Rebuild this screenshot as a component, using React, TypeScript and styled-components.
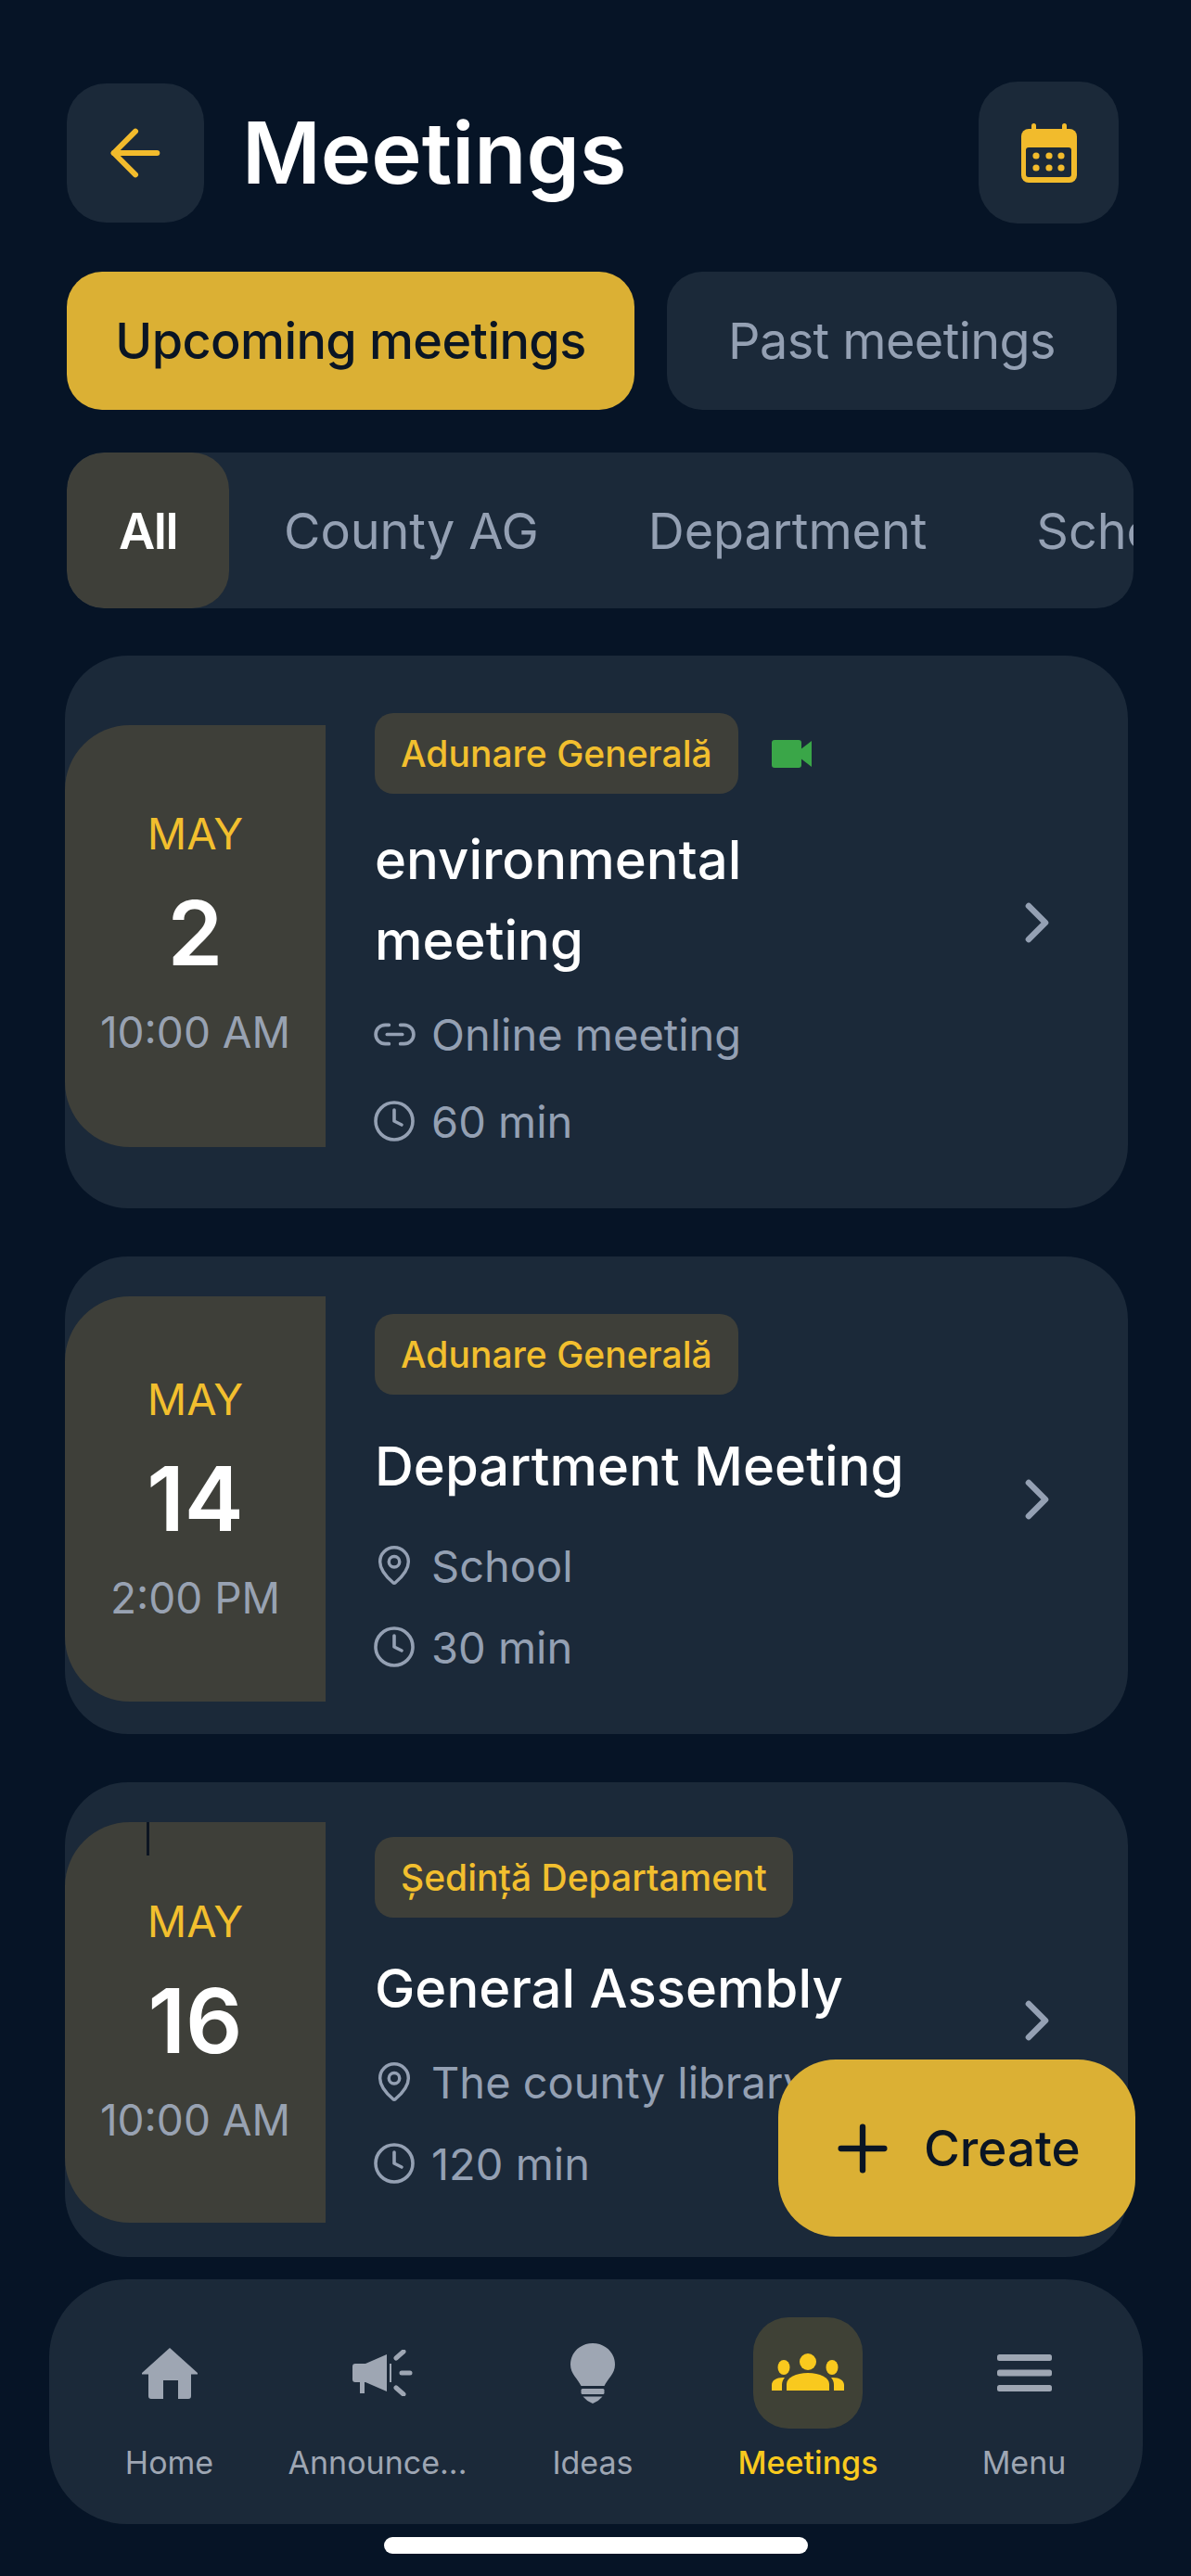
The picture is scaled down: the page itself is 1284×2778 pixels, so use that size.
import React from "react";
import styled, { createGlobalStyle } from "styled-components";
import { ArrowLeft, ChevronRight, Clock, Link2, MapPin, Plus } from "lucide-react";

const Global = createGlobalStyle`
  html, body { margin: 0; padding: 0; background: #061426; }
  * { box-sizing: border-box; }
`;

const Page = styled.div`
  position: relative;
  width: 1284px;
  height: 2778px;
  overflow: hidden;
  background: #061426;
  font-family: Inter, "Liberation Sans", sans-serif;
  color: #fff;
`;
const Content = styled.div`
  padding: 88px 70px 0;
  display: flex;
  flex-direction: column;
`;
const Header = styled.header`
  display: flex;
  align-items: center;
  width: 1134px;
  margin-left: 2px;
`;
const IconBtn = styled.button<{ $w: number; $h: number }>`
  width: ${(p) => p.$w}px;
  height: ${(p) => p.$h}px;
  flex: none;
  border: 0;
  padding: 0;
  border-radius: 42px;
  background: #1b2939;
  color: #f2bb2c;
  display: flex;
  align-items: center;
  justify-content: center;
`;
const Title = styled.h1`
  flex: 1;
  margin: 0 0 0 41px;
  font-size: 92px;
  line-height: 110px;
  font-weight: 600;
`;
const Tabs = styled.div`
  display: flex;
  gap: 35px;
  margin: 52px 0 0 2px;
`;
const Tab = styled.div<{ $active?: boolean; $w: number }>`
  width: ${(p) => p.$w}px;
  height: 149px;
  border-radius: 38px;
  display: flex;
  align-items: center;
  justify-content: center;
  font-size: 54px;
  letter-spacing: -0.6px;
  font-weight: ${(p) => (p.$active ? 500 : 400)};
  background: ${(p) => (p.$active ? "#dbb034" : "#1b2939")};
  color: ${(p) => (p.$active ? "#0a1524" : "#94a0b3")};
`;
const Filters = styled.div`
  display: flex;
  width: 1150px;
  height: 168px;
  margin: 46px 0 0 2px;
  border-radius: 40px;
  background: #1b2939;
  overflow: hidden;
`;
const Filter = styled.div<{ $active?: boolean }>`
  flex: none;
  display: flex;
  align-items: center;
  padding: 0 ${(p) => (p.$active ? 56 : 59)}px;
  font-size: 54px;
  font-weight: ${(p) => (p.$active ? 600 : 400)};
  letter-spacing: ${(p) => (p.$active ? -1.5 : -0.1)}px;
  border-radius: 40px;
  background: ${(p) => (p.$active ? "#3e3f39" : "transparent")};
  color: ${(p) => (p.$active ? "#fff" : "#94a0b3")};
`;
const Cards = styled.div`
  display: flex;
  flex-direction: column;
  gap: 52px;
  margin-top: 51px;
`;
const Card = styled.article<{ $h: number }>`
  display: flex;
  width: 1146px;
  height: ${(p) => p.$h}px;
  border-radius: 68px;
  background: #1b2939;
`;
const DateBlock = styled.div<{ $top: number; $bottom: number; $lift: number }>`
  position: relative;
  flex: none;
  width: 281px;
  margin: ${(p) => p.$top}px 0 ${(p) => p.$bottom}px;
  padding-bottom: ${(p) => p.$lift}px;
  border-radius: 70px 0 0 70px;
  background: #3e3f39;
  display: flex;
  flex-direction: column;
  align-items: center;
  justify-content: center;
`;
const Tick = styled.span`
  position: absolute;
  left: 88px;
  top: 0;
  width: 3px;
  height: 36px;
  background: #0c1522;
`;
const Month = styled.div`
  font-size: 47px;
  line-height: 60px;
  color: #f2bf2e;
`;
const Day = styled.div`
  font-size: 96px;
  line-height: 110px;
  font-weight: 600;
  margin: 22px 0;
`;
const Time = styled.div`
  font-size: 46px;
  line-height: 60px;
  color: #98a2b2;
`;
const Body = styled.div<{ $top: number }>`
  flex: 1;
  min-width: 0;
  padding: ${(p) => p.$top}px 0 0 53px;
`;
const TagRow = styled.div`
  display: flex;
  align-items: center;
  gap: 36px;
`;
const Tag = styled.span`
  height: 87px;
  padding: 0 28px;
  border-radius: 20px;
  background: #3e3f39;
  color: #f2bf2e;
  font-size: 39px;
  font-weight: 500;
  display: flex;
  align-items: center;
`;
const CardTitle = styled.h2<{ $before: number; $after: number }>`
  width: 640px;
  margin: ${(p) => p.$before}px 0 ${(p) => p.$after}px;
  font-size: 58px;
  line-height: 87px;
  font-weight: 500;
`;
const Meta = styled.div<{ $row: number }>`
  height: ${(p) => p.$row}px;
  display: flex;
  align-items: center;
  gap: 18px;
  font-size: 47px;
  white-space: nowrap;
  color: #94a0b3;
`;
const MetaIcon = styled.span`
  width: 44px;
  flex: none;
  display: flex;
  justify-content: center;
  margin-left: -1px;
  svg { flex: none; }
`;
const Chevron = styled.div<{ $shift: number }>`
  flex: none;
  align-self: center;
  margin: ${(p) => Math.max(p.$shift, 0) * 2}px 62px ${(p) => Math.max(-p.$shift, 0) * 2}px 0;
  color: #94a0b3;
  display: flex;
`;
const Fab = styled.button`
  position: absolute;
  left: 839px;
  top: 2221px;
  width: 385px;
  height: 191px;
  padding: 0 0 0 51px;
  border: 0;
  border-radius: 62px;
  background: #dbb034;
  color: #0a1524;
  display: flex;
  align-items: center;
  gap: 26px;
  font-family: inherit;
  font-size: 53px;
  font-weight: 500;
`;
const Nav = styled.nav`
  display: grid;
  grid-template-columns: 231px 218px 246px 218px 248px;
  width: 1179px;
  height: 264px;
  margin: 24px 0 0 53px;
  padding: 41px 0 0 14px;
  border-radius: 84px;
  background: #1b2939;
`;
const NavItem = styled.div<{ $active?: boolean }>`
  display: flex;
  flex-direction: column;
  align-items: center;
  color: ${(p) => (p.$active ? "#f9c91e" : "#9ea6b3")};
`;
const NavIcon = styled.div<{ $active?: boolean }>`
  width: 118px;
  height: 120px;
  border-radius: 38px;
  background: ${(p) => (p.$active ? "#3f4136" : "transparent")};
  display: flex;
  align-items: center;
  justify-content: center;
`;
const NavLabel = styled.div<{ $active?: boolean }>`
  margin-top: 17px;
  font-size: 34px;
  line-height: 40px;
  font-weight: ${(p) => (p.$active ? 500 : 400)};
  white-space: nowrap;
`;
const HomeBar = styled.div`
  width: 457px;
  height: 18px;
  margin: 14px auto 0;
  border-radius: 9px;
  background: #fff;
`;

const CalendarIcon = () => (
  <svg width="60" height="64" viewBox="0 0 60 64" fill="none">
    <rect x="11" y="0" width="5" height="14" rx="2.5" fill="#f2bb2c" />
    <rect x="44" y="0" width="5" height="14" rx="2.5" fill="#f2bb2c" />
    <rect x="0" y="6" width="60" height="58" rx="8" fill="#f2bb2c" />
    <rect x="5" y="26" width="49" height="32" rx="3" fill="#1b2939" />
    {[16, 30, 43].flatMap((x) =>
      [35, 48].map((y) => <circle key={`${x}-${y}`} cx={x} cy={y} r="3.6" fill="#f2bb2c" />)
    )}
  </svg>
);
const VideoIcon = () => (
  <svg width="43" height="30" viewBox="0 0 43 30" fill="#3aa648">
    <rect x="0" y="0" width="32" height="30" rx="3" />
    <path d="M30 11 43 1v28L30 19Z" />
  </svg>
);
const HomeIcon = () => (
  <svg width="60" height="55" viewBox="0 0 60 55" fill="currentColor">
    <path d="M30 0 60 27a.8.8 0 0 1-.5 1.5H53V52a3 3 0 0 1-3 3H39V35H23v20H10a3 3 0 0 1-3-3V28.500H.5A.8.8 0 0 1 0 27Z" />
  </svg>
);
const MegaphoneIcon = () => (
  <svg width="65" height="50" viewBox="0 0 65 50" fill="currentColor" style={{ marginLeft: 10 }}>
    <path d="M3 15H14L37 5V45L14 35H13V47H8V35H3a3 3 0 0 1-3-3V18a3 3 0 0 1 3-3Z" />
    <path d="M41 15V35" stroke="currentColor" strokeWidth="2" fill="none" />
    <path d="M47 9 55 2M47 41 55 48M53 25H62" stroke="currentColor" strokeWidth="5" strokeLinecap="round" fill="none" />
  </svg>
);
const BulbIcon = () => (
  <svg width="48" height="65" viewBox="0 0 50 65" preserveAspectRatio="none" fill="currentColor">
    <path d="M25 0C39 0 50 10 50 23 50 33 42 38 38 46H12C8 38 0 33 0 23 0 10 11 0 25 0Z" />
    <rect x="12" y="49" width="26" height="6" rx="1.500" />
    <path d="M14 57.500H36L31 62 25 65 19 62Z" />
  </svg>
);
const GroupIcon = () => (
  <svg width="78" height="42" viewBox="0 0 78 42" fill="currentColor">
    <circle cx="39" cy="9" r="9" />
    <ellipse cx="13" cy="15" rx="6.500" ry="8" />
    <ellipse cx="65" cy="15" rx="6.500" ry="8" />
    <path d="M16 40V33C16 26 26 21 39 21 52 21 62 26 62 33V40Z" />
    <path d="M0 40V34C0 29 5 26 12 26 13 26 14 26 14 26 12 28 11 31 11 34V40Z" />
    <path d="M78 40V34C78 29 73 26 66 26 65 26 64 26 64 26 66 28 67 31 67 34V40Z" />
  </svg>
);
const MenuIcon = () => (
  <svg width="59" height="40" viewBox="0 0 59 40" fill="currentColor">
    <rect y="0" width="59" height="7" rx="2.500" />
    <rect y="16.500" width="59" height="7" rx="2.500" />
    <rect y="33" width="59" height="7" rx="2.500" />
  </svg>
);

type M = {
  h: number; top: number; bottom: number; lift: number; bodyTop: number; shift: number; day: string; time: string;
  tag: string; title: React.ReactNode; before: number; after: number; row: number;
  online?: boolean; place: string; dur: string; tick?: boolean;
};
const meetings: M[] = [
  { h: 596, top: 75, bottom: 66, lift: 8, bodyTop: 62, shift: -10, day: "2", time: "10:00 AM", tag: "Adunare Generală",
    title: <>environmental<br />meeting</>, before: 28, after: 10, row: 94, online: true, place: "Online meeting", dur: "60 min" },
  { h: 515, top: 43, bottom: 35, lift: 2, bodyTop: 62, shift: 4, day: "14", time: "2:00 PM", tag: "Adunare Generală",
    title: "Department Meeting", before: 34, after: 19, row: 88, place: "School", dur: "30 min" },
  { h: 512, top: 43, bottom: 37, lift: 4, bodyTop: 59, shift: 1, day: "16", time: "10:00 AM", tag: "Ședință Departament",
    title: "General Assembly", before: 33, after: 13, row: 88, place: "The county library", dur: "120 min", tick: true },
];
const nav = [
  { label: "Home", icon: <HomeIcon /> },
  { label: "Announce...", icon: <MegaphoneIcon /> },
  { label: "Ideas", icon: <BulbIcon /> },
  { label: "Meetings", icon: <GroupIcon />, active: true },
  { label: "Menu", icon: <MenuIcon /> },
];

export default function App() {
  return (
    <Page>
      <Global />
      <Content>
        <Header>
          <IconBtn $w={148} $h={150}><ArrowLeft size={80} strokeWidth={1.8} /></IconBtn>
          <Title>Meetings</Title>
          <IconBtn $w={151} $h={153}><CalendarIcon /></IconBtn>
        </Header>
        <Tabs>
          <Tab $active $w={612}>Upcoming meetings</Tab>
          <Tab $w={485}>Past meetings</Tab>
        </Tabs>
        <Filters>
          <Filter $active>All</Filter>
          <Filter>County AG</Filter>
          <Filter>Department</Filter>
          <Filter>School</Filter>
        </Filters>
        <Cards>
          {meetings.map((m) => (
            <Card key={m.day} $h={m.h}>
              <DateBlock $top={m.top} $bottom={m.bottom} $lift={m.lift}>
                {m.tick && <Tick />}
                <Month>MAY</Month>
                <Day>{m.day}</Day>
                <Time>{m.time}</Time>
              </DateBlock>
              <Body $top={m.bodyTop}>
                <TagRow>
                  <Tag>{m.tag}</Tag>
                  {m.online && <VideoIcon />}
                </TagRow>
                <CardTitle $before={m.before} $after={m.after}>{m.title}</CardTitle>
                <Meta $row={m.row}>
                  <MetaIcon>
                    {m.online ? <Link2 size={49} strokeWidth={1.8} /> : <MapPin size={46} strokeWidth={1.8} />}
                  </MetaIcon>
                  {m.place}
                </Meta>
                <Meta $row={m.row}>
                  <MetaIcon><Clock size={48} strokeWidth={1.8} /></MetaIcon>
                  {m.dur}
                </Meta>
              </Body>
              <Chevron $shift={m.shift}><ChevronRight size={72} strokeWidth={2.2} /></Chevron>
            </Card>
          ))}
        </Cards>
      </Content>
      <Nav>
        {nav.map((n) => (
          <NavItem key={n.label} $active={n.active}>
            <NavIcon $active={n.active}>{n.icon}</NavIcon>
            <NavLabel $active={n.active}>{n.label}</NavLabel>
          </NavItem>
        ))}
      </Nav>
      <HomeBar />
      <Fab><Plus size={80} strokeWidth={1.9} />Create</Fab>
    </Page>
  );
}
